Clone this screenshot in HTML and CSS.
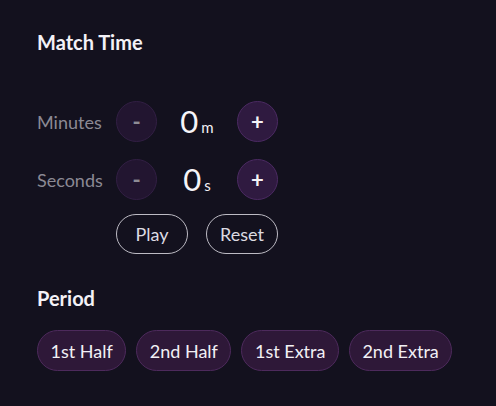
FILE: index.html
```html
<!DOCTYPE html>
<html>
<head>
<meta charset="utf-8">
<link rel="stylesheet" href="styles.css">
</head>
<body>
<div class="panel">
  <h2 class="title">Match Time</h2>
  <div class="time-row first">
    <span class="label">Minutes</span>
    <button class="round disabled">-</button>
    <div class="value"><span class="num">0</span><span class="unit">m</span></div>
    <button class="round">+</button>
  </div>
  <div class="time-row">
    <span class="label">Seconds</span>
    <button class="round disabled">-</button>
    <div class="value"><span class="num">0</span><span class="unit">s</span></div>
    <button class="round">+</button>
  </div>
  <div class="controls">
    <button class="outline">Play</button>
    <button class="outline">Reset</button>
  </div>
  <h2 class="title period">Period</h2>
  <div class="pills">
    <button class="pill">1st Half</button>
    <button class="pill">2nd Half</button>
    <button class="pill">1st Extra</button>
    <button class="pill">2nd Extra</button>
  </div>
</div>
</body>
</html>
```
FILE: styles.css
```css
html, body {
  margin: 0;
  padding: 0;
  background: #13111e;
  height: 100%;
}
body {
  font-family: Lato, "Noto Sans", sans-serif;
  color: #f2f0f5;
}
.panel {
  padding: 30px 37px 0 37px;
}
.title {
  margin: 0;
  font-size: 20px;
  line-height: 24px;
  font-weight: 700;
  color: #f4f2f7;
}
.time-row {
  display: flex;
  align-items: center;
  height: 41px;
  margin-top: 17px;
}
.time-row.first {
  margin-top: 47px;
}
.label {
  width: 79px;
  font-size: 18px;
  color: #8b8994;
}
button {
  font-family: inherit;
  padding: 0;
  margin: 0;
  cursor: pointer;
}
.round {
  width: 41px;
  height: 41px;
  border-radius: 50%;
  background: #2f1a40;
  border: 1px solid #4b2a62;
  color: #f4f2f7;
  font-size: 22px;
  font-weight: 700;
  line-height: 1;
  display: flex;
  align-items: center;
  justify-content: center;
}
.round.disabled {
  opacity: 0.55;
}
.value {
  width: 80px;
  display: flex;
  justify-content: center;
  align-items: baseline;
  gap: 3px;
}
.num {
  font-size: 31px;
  font-weight: 400;
  color: #f6f4f8;
  line-height: 1;
}
.unit {
  font-size: 15px;
  color: #f2f0f5;
}
.controls {
  display: flex;
  gap: 18px;
  margin-top: 14px;
  margin-left: 79px;
}
.outline {
  width: 72px;
  height: 40px;
  border-radius: 20px;
  background: transparent;
  border: 1px solid #bdbbc4;
  color: #dddbe2;
  font-size: 18px;
}
.title.period {
  margin-top: 32px;
}
.pills {
  display: flex;
  gap: 10px;
  margin-top: 20px;
}
.pill {
  height: 41px;
  padding: 0 12.5px;
  border-radius: 21px;
  background: #2e1838;
  border: 1px solid #4d2a5c;
  color: #f2f0f5;
  font-size: 18px;
}
```
